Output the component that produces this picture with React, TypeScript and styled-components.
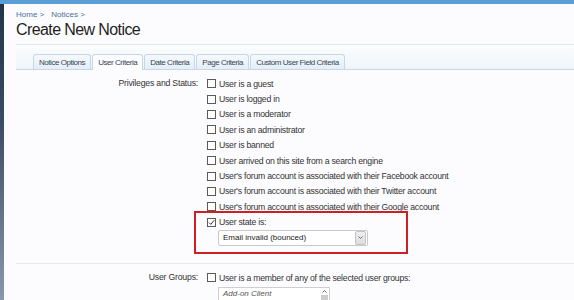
import styled, { createGlobalStyle } from "styled-components";

const GlobalStyle = createGlobalStyle`
  html, body {
    margin: 0;
    padding: 0;
    background: #fcfcfe;
    font-family: "Liberation Sans", Arial, sans-serif;
    overflow: hidden;
  }
`;

const Frame = styled.div`
  display: flex;
  flex-direction: column;
  width: 574px;
  height: 300px;
  overflow: hidden;
`;

const TopBar = styled.div`
  height: 4px;
  background: #5b9ed6;
  flex: none;
`;

const Body = styled.div`
  display: flex;
  flex: 1;
`;

const SideStrip = styled.div`
  width: 4px;
  flex: none;
  background: linear-gradient(#22344a, #3c4e66 40%, #8d9cb0);
`;

const Content = styled.main`
  flex: 1;
  padding-left: 12px;
  display: flex;
  flex-direction: column;
`;

const Breadcrumb = styled.nav`
  display: flex;
  gap: 7px;
  margin-top: 6px;
  font-size: 8px;
  line-height: 10px;
  color: #47709d;
`;

const Title = styled.h1`
  margin: 0;
  font-weight: 400;
  font-size: 16px;
  line-height: 20px;
  color: #1f1f1f;
  letter-spacing: -0.6px;
`;

const TabBar = styled.div`
  margin-top: 4px;
  border-top: 1px solid #e3e7ec;
  border-bottom: 1px solid #c6d8e8;
  background: linear-gradient(#fbfdfe, #eef5fa);
  padding: 9px 0 0 17px;
  display: flex;
  gap: 1px;
`;

const Tab = styled.div<{ $active?: boolean }>`
  height: 14px;
  padding: 0 5px;
  display: flex;
  align-items: center;
  font-size: 8px;
  letter-spacing: -0.45px;
  color: #3b4654;
  border: 1px solid #c6d8e8;
  border-bottom: none;
  border-radius: 3px 3px 0 0;
  margin-bottom: ${(p) => (p.$active ? "-1px" : "0")};
  background: ${(p) =>
    p.$active ? "#fcfcfe" : "linear-gradient(#f5f9fc, #e3eef7)"};
  padding-bottom: ${(p) => (p.$active ? "1px" : "0")};
`;

const Fieldset = styled.section`
  display: grid;
  grid-template-columns: 182px 1fr;
  column-gap: 9px;
  padding: 6px 0 0;
`;

const Label = styled.div`
  text-align: right;
  font-size: 8.7px;
  letter-spacing: -0.2px;
  line-height: 15.4px;
  color: #333;
`;

const Options = styled.div`
  display: flex;
  flex-direction: column;
`;

const OptionRow = styled.label`
  display: flex;
  align-items: center;
  gap: 3px;
  height: 15.4px;
  font-size: 8.7px;
  letter-spacing: -0.25px;
  color: #333;
`;

const Box = styled.span`
  width: 7px;
  height: 7px;
  border: 1px solid #5a5a5a;
  background: #fff;
  display: flex;
  align-items: center;
  justify-content: center;
  flex: none;
`;

const Highlight = styled.div`
  margin-left: -13px;
  width: 199px;
  border: 2px solid #cf1f25;
  padding: 2px 0 6px 11px;
  margin-top: -4px;
`;

const Select = styled.div`
  margin-left: 11px;
  width: 148px;
  height: 14px;
  border: 1px solid #c9c9c9;
  border-radius: 2px;
  background: #fff;
  display: flex;
  align-items: center;
  font-size: 8px;
  color: #222;
`;

const SelectText = styled.span`
  flex: 1;
  padding-left: 4px;
`;

const SelectArrow = styled.span`
  width: 9px;
  height: 12px;
  margin-right: 1px;
  background: linear-gradient(#eeeeee, #dcdcdc);
  border: 1px solid #c4c4c4;
  border-radius: 2px;
  display: flex;
  align-items: center;
  justify-content: center;
`;

const Divider = styled.hr`
  margin: 9px 0 0;
  border: none;
  border-top: 1px solid #e6eaef;
`;

const ListBox = styled.div`
  margin: 2px 0 0 11px;
  width: 110px;
  height: 20px;
  border: 1px solid #cfcfcf;
  background: #fff;
  display: flex;
`;

const ListItem = styled.span`
  flex: 1;
  padding: 1px 4px;
  font-size: 8px;
  line-height: 10px;
  font-style: italic;
  color: #555;
`;

const ScrollTrack = styled.span`
  width: 9px;
  display: flex;
  flex-direction: column;
  align-items: center;
  padding-top: 2px;
`;

const Thumb = styled.span`
  width: 7px;
  height: 8px;
  margin-top: 2px;
  background: #cdcdcd;
`;

const Check = () => (
  <svg width="7" height="7" viewBox="0 0 7 7">
    <path d="M1 3.6 L2.8 5.4 L6.2 1.2" fill="none" stroke="#333" strokeWidth="1" />
  </svg>
);

const privileges = [
  "User is a guest",
  "User is logged in",
  "User is a moderator",
  "User is an administrator",
  "User is banned",
  "User arrived on this site from a search engine",
  "User's forum account is associated with their Facebook account",
  "User's forum account is associated with their Twitter account",
  "User's forum account is associated with their Google account",
];

const tabs = [
  "Notice Options",
  "User Criteria",
  "Date Criteria",
  "Page Criteria",
  "Custom User Field Criteria",
];

export default function App() {
  return (
    <Frame>
      <GlobalStyle />
      <TopBar />
      <Body>
        <SideStrip />
        <Content>
          <Breadcrumb>
            <span>Home &gt;</span>
            <span>Notices &gt;</span>
          </Breadcrumb>
          <Title>Create New Notice</Title>
          <TabBar>
            {tabs.map((t) => (
              <Tab key={t} $active={t === "User Criteria"}>
                {t}
              </Tab>
            ))}
          </TabBar>
          <Fieldset>
            <Label>Privileges and Status:</Label>
            <Options>
              {privileges.map((p) => (
                <OptionRow key={p}>
                  <Box />
                  {p}
                </OptionRow>
              ))}
              <Highlight>
                <OptionRow>
                  <Box>
                    <Check />
                  </Box>
                  User state is:
                </OptionRow>
                <Select>
                  <SelectText>Email invalid (bounced)</SelectText>
                  <SelectArrow>
                    <svg width="5" height="3" viewBox="0 0 5 3">
                      <path d="M0.5 0.5 L2.5 2.5 L4.5 0.5" fill="none" stroke="#555" strokeWidth="0.8" />
                    </svg>
                  </SelectArrow>
                </Select>
              </Highlight>
            </Options>
          </Fieldset>
          <Divider />
          <Fieldset>
            <Label>User Groups:</Label>
            <Options>
              <OptionRow>
                <Box />
                User is a member of any of the selected user groups:
              </OptionRow>
              <ListBox>
                <ListItem>Add-on Client</ListItem>
                <ScrollTrack>
                  <svg width="5" height="3" viewBox="0 0 5 3">
                    <path d="M0.5 2.5 L2.5 0.5 L4.5 2.5" fill="none" stroke="#444" strokeWidth="0.8" />
                  </svg>
                  <Thumb />
                </ScrollTrack>
              </ListBox>
            </Options>
          </Fieldset>
        </Content>
      </Body>
    </Frame>
  );
}
